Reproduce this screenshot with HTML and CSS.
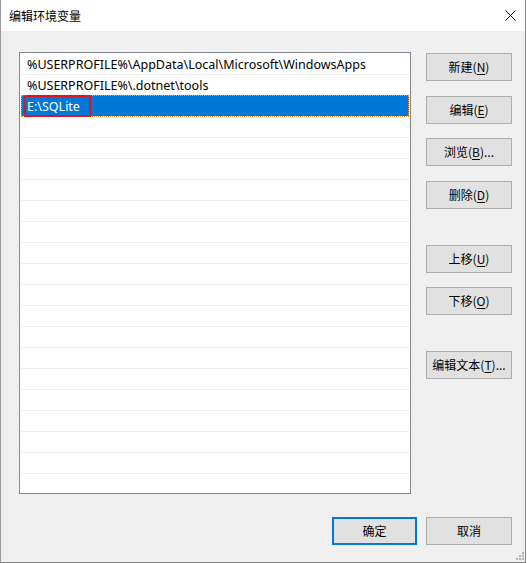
FILE: index.html
```html
<!DOCTYPE html>
<html lang="zh-CN">
<head>
<meta charset="utf-8">
<title>编辑环境变量</title>
<link rel="stylesheet" href="styles.css">
</head>
<body>
<div class="window">
  <div class="titlebar">
    <span class="title">编辑环境变量</span>
    <svg class="close" width="11" height="11" viewBox="0 0 11 11" aria-hidden="true">
      <path d="M0.5 0.5 L10.5 10.5 M10.5 0.5 L0.5 10.5" stroke="#000" stroke-width="1" fill="none"/>
    </svg>
  </div>
  <div class="content">
    <div class="main">
      <div class="list">
        <div class="row">%USERPROFILE%\AppData\Local\Microsoft\WindowsApps</div>
        <div class="row">%USERPROFILE%\.dotnet\tools</div>
        <div class="row selected">E:\SQLite<span class="mark"></span></div>
        <div class="row"></div>
        <div class="row"></div>
        <div class="row"></div>
        <div class="row"></div>
        <div class="row"></div>
        <div class="row"></div>
        <div class="row"></div>
        <div class="row"></div>
        <div class="row"></div>
        <div class="row"></div>
        <div class="row"></div>
        <div class="row"></div>
        <div class="row"></div>
        <div class="row"></div>
        <div class="row"></div>
        <div class="row"></div>
        <div class="row"></div>
        <div class="row"></div>
      </div>
      <div class="side">
        <button class="btn">新建(<u>N</u>)</button>
        <button class="btn">编辑(<u>E</u>)</button>
        <button class="btn">浏览(<u>B</u>)...</button>
        <button class="btn">删除(<u>D</u>)</button>
        <button class="btn sep">上移(<u>U</u>)</button>
        <button class="btn">下移(<u>O</u>)</button>
        <button class="btn sep">编辑文本(<u>T</u>)...</button>
      </div>
    </div>
    <div class="footer">
      <button class="btn default">确定</button>
      <button class="btn">取消</button>
    </div>
  </div>
  <svg class="grip" width="8" height="8" viewBox="0 0 8 8" aria-hidden="true">
    <rect x="6" y="0" width="2" height="2" fill="#b4b4b4"/>
    <rect x="3" y="3" width="2" height="2" fill="#b4b4b4"/>
    <rect x="6" y="3" width="2" height="2" fill="#b4b4b4"/>
    <rect x="0" y="6" width="2" height="2" fill="#b4b4b4"/>
    <rect x="3" y="6" width="2" height="2" fill="#b4b4b4"/>
    <rect x="6" y="6" width="2" height="2" fill="#b4b4b4"/>
  </svg>
</div>
</body>
</html>
```

FILE: styles.css
```css
html, body {
  margin: 0;
  padding: 0;
  background: #ffffff;
}

body {
  font-family: "Noto Sans", "Noto Sans CJK SC", sans-serif;
  font-size: 12px;
  color: #000;
}

.window {
  position: relative;
  width: 526px;
  height: 563px;
  box-sizing: border-box;
  border-left: 1px solid #9a9a9a;
  border-right: 1px solid #858585;
  border-bottom: 1px solid #858585;
  background: #f0f0f0;
  display: flex;
  flex-direction: column;
}

.titlebar {
  height: 31px;
  flex: none;
  background: #ffffff;
  display: flex;
  align-items: center;
  justify-content: space-between;
  padding: 0 9px 0 8px;
}

.title {
  font-family: "Noto Sans CJK SC", sans-serif;
  font-size: 12px;
  line-height: 31px;
  color: #000;
}

.close {
  display: block;
}

.content {
  flex: 1;
  display: flex;
  flex-direction: column;
  padding: 21px 13px 0 18px;
}

.main {
  display: flex;
  gap: 15px;
}

.list {
  width: 392px;
  height: 442px;
  box-sizing: border-box;
  border: 1px solid #828790;
  background: #ffffff;
  padding: 1px;
  overflow: hidden;
}

.row {
  position: relative;
  height: 20px;
  line-height: 21px;
  border-bottom: 1px solid #f0f0f0;
  padding-left: 6px;
  white-space: nowrap;
  font-family: "Noto Sans", "Noto Sans CJK SC", sans-serif;
  font-size: 12.5px;
  color: #000;
}

.row.selected {
  background: #0078d7;
  color: #ffffff;
  outline: 1px dotted #f39a3c;
  outline-offset: -1px;
  margin-top: -1px;
  border-top: 1px solid #0078d7;
  border-bottom-color: #ffffff;
}

.mark {
  position: absolute;
  left: 3px;
  top: -1px;
  width: 67px;
  height: 22px;
  box-sizing: border-box;
  border: 2px solid #e3141f;
  border-radius: 1px;
}

.side {
  width: 86px;
  display: flex;
  flex-direction: column;
  gap: 14.5px;
  padding-top: 1px;
}

.btn {
  width: 86px;
  height: 28px;
  box-sizing: border-box;
  border: 1px solid #adadad;
  background: #e1e1e1;
  font-family: "Noto Sans CJK SC", sans-serif;
  font-size: 12px;
  color: #000;
  padding: 0;
  margin: 0;
  text-align: center;
  line-height: 26px;
}

.btn u {
  text-underline-offset: 2px;
}

.sep {
  margin-top: 21.5px;
}

.footer {
  display: flex;
  justify-content: flex-end;
  gap: 9px;
  margin-top: 23px;
}

.footer .btn {
  width: 86px;
}

.btn.default {
  width: 85px;
  border: 2px solid #0078d7;
  line-height: 24px;
}

.grip {
  position: absolute;
  right: 1px;
  bottom: 2px;
  display: block;
}
```
